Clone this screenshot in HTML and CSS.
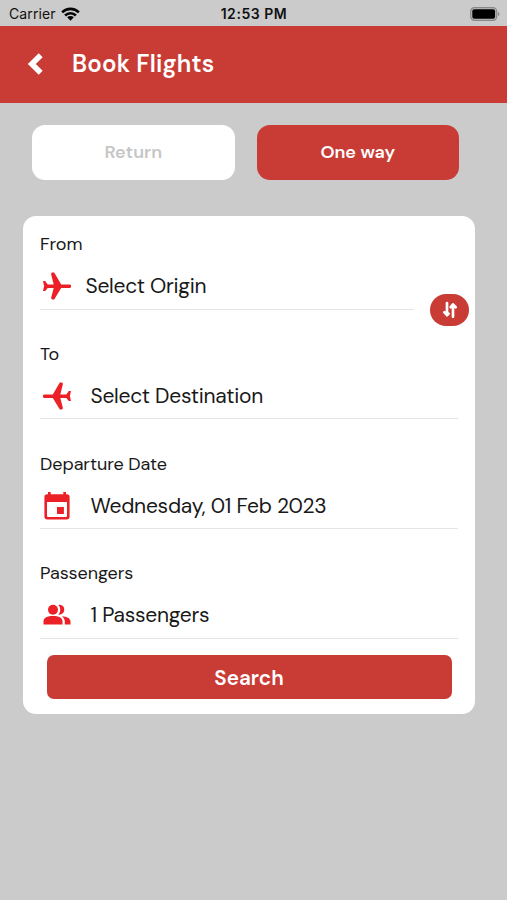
FILE: index.html
```html
<!DOCTYPE html>
<html lang="en">
<head>
<meta charset="utf-8">
<title>Book Flights</title>
<link rel="stylesheet" href="styles.css">
</head>
<body>
<div class="status">
  <div class="carrier"><span class="carrier-name">Carrier</span>
    <svg class="wifi" viewBox="0 0 20 14"><g fill="none" stroke="#050505" stroke-width="2.7"><path d="M1.2 5.2a12.5 12.5 0 0 1 17.6 0"/><path d="M4.3 8.6a8.1 8.1 0 0 1 11.4 0"/></g><path fill="#050505" d="M6.5 10.5a5 5 0 0 1 7 0L10 14z"/></svg>
  </div>
  <span class="time">12:53 PM</span>
  <svg class="battery" viewBox="0 0 30 14"><rect x=".7" y=".7" width="26" height="12.6" rx="3.7" fill="#bbb" stroke="#888" stroke-width="1.2"/><rect x="2.3" y="2.3" width="22.8" height="9.4" rx="2" fill="#000"/><path d="M28 4.7q3 2.3 0 4.6z" fill="#888"/></svg>
</div>
<header class="header">
  <svg class="back" viewBox="0 0 16 22"><path d="M13.700 2.200L4.800 11l8.900 8.800" fill="none" stroke="#fff" stroke-width="5.600"/></svg>
  <h1>Book Flights</h1>
</header>
<div class="tabs">
  <button class="tab">Return</button>
  <button class="tab active">One way</button>
</div>
<main class="card">
  <section class="field origin">
    <div class="label">From</div>
    <div class="value">
      <svg class="icon" viewBox="0 0 28 28"><path class="red" d="M0 9h2.200l2.500 3.400h6L8.200 2.500Q7.900.5 9.400.5h1.800l7 11.900h8.300a1.750 1.750 0 0 1 0 3.500h-8.300L11.200 27.500H9.400q-1.500 0-1.200-2l2.500-9.600h-6L2.200 19H0l1.100-4.900z"/></svg>
      <span>Select Origin</span>
    </div>
    <button class="swap" aria-label="Swap"><svg viewBox="0 0 16 18"><path d="M5 2v11.500M2.300 11.200L5 14.200 6.600 12.600M11 15.800V4.500M8.700 6.200L11 3.400l2.700 2.800" fill="none" stroke="#fff" stroke-width="2.700" stroke-linecap="round" stroke-linejoin="round"/></svg></button>
  </section>
  <section class="field">
    <div class="label">To</div>
    <div class="value">
      <svg class="icon" viewBox="0 0 28 28"><path class="red" transform="matrix(-1 0 0 1 28 0)" d="M0 9h2.200l2.500 3.400h6L8.200 2.500Q7.900.5 9.400.5h1.800l7 11.900h8.300a1.750 1.750 0 0 1 0 3.500h-8.300L11.200 27.500H9.400q-1.500 0-1.200-2l2.500-9.600h-6L2.200 19H0l1.100-4.900z"/></svg>
      <span>Select Destination</span>
    </div>
  </section>
  <section class="field">
    <div class="label">Departure Date</div>
    <div class="value">
      <svg class="icon" viewBox="0 0 28 28"><path class="red" fill-rule="evenodd" d="M5 0h2.700v2.300h12.600V0H23v2.300h.8A2.800 2.800 0 0 1 26.600 5.100v19.400a3 3 0 0 1-3 3H4.400a3 3 0 0 1-3-3V5.100a2.800 2.800 0 0 1 2.800-2.800H5zM4 10v14q0 1 1 1h18q1 0 1-1V10zM14 15h6.900v6.900H14z"/></svg>
      <span>Wednesday, 01 Feb 2023</span>
    </div>
  </section>
  <section class="field">
    <div class="label">Passengers</div>
    <div class="value">
      <svg class="icon" viewBox="0 0 28 28"><g class="red"><circle cx="10" cy="8.700" r="5"/><path d="M.5 23.500v-3c0-4 4-5.600 9.500-5.600s9.500 1.600 9.500 5.600v3zM15.300 13.500c2.600-2 2.600-7.500 0-9.500 8-1.500 8 11 0 9.500zM19 15.200c4.700.5 8.500 2 8.500 5.300v3h-5.700v-3c0-2-1-3.700-2.800-5.300z"/></g></svg>
      <span>1 Passengers</span>
    </div>
  </section>
  <button class="search">Search</button>
</main>
</body>
</html>
```
FILE: styles.css
```css
* { box-sizing: border-box; }
body { margin: 0; height: 900px; background: #cbcbcb; color: #191919; font-family: "DM Sans", Inter, "Open Sans", sans-serif; overflow: hidden; }
button { border: 0; padding: 0; font-family: inherit; }
span { white-space: nowrap; }
.status { height: 25.500px; padding: 2px 7px 0 9px; display: grid; grid-template-columns: 1fr auto 1fr; align-items: center; font-family: Inter, sans-serif; color: #111; }
.carrier { display: flex; align-items: center; gap: 5.500px; font-size: 14px; letter-spacing: .1px; }
.wifi { width: 19px; height: 14px; }
.time { font-size: 14px; font-weight: 600; letter-spacing: .55px; margin-right: 1px; }
.battery { width: 30px; height: 14px; justify-self: end; }
.header { height: 77px; background: #c93c36; display: flex; align-items: center; padding-left: 27px; gap: 29px; color: #fff; }
.back { width: 16px; height: 22px; }
h1 { margin: 0; font-size: 24px; line-height: 30px; font-weight: 600; letter-spacing: .2px; }
.tabs { display: flex; gap: 22px; padding: 22px 48px 0 32px; }
.tab { flex: 1; height: 55.500px; border-radius: 13px; background: #fff; color: #c6c6c6; font-size: 18px; font-weight: 600; }
.tab.active { background: #c93c36; color: #fff; }
.card { margin: 36px 32px 0 23px; height: 498px; border-radius: 13px; background: #fff; padding: 0 17px; }
.field { height: 109.800px; padding-top: 16px; position: relative; }
.label { height: 24px; line-height: 24px; font-size: 18px; letter-spacing: -.08px; }
.value { height: 53.500px; display: flex; align-items: center; gap: 19.500px; padding: 7.500px 0 0 3px; border-bottom: 1px solid #e5e5e5; font-size: 21px; line-height: 28px; letter-spacing: -.25px; }
.origin .value { margin-right: 44px; gap: 14.500px; }
.icon { width: 28px; height: 28px; flex: none; }
.red { fill: #ec2027; }
.swap { position: absolute; right: -11px; top: 77.500px; width: 39px; height: 32px; border-radius: 16px; background: #c93c36; display: flex; align-items: center; justify-content: center; }
.swap svg { width: 16px; height: 18px; }
.search { display: block; width: 405px; height: 44px; margin: 0 0 0 6.500px; border-radius: 7px; background: #c93c36; color: #fff; font-size: 20.700px; font-weight: 600; }
```
